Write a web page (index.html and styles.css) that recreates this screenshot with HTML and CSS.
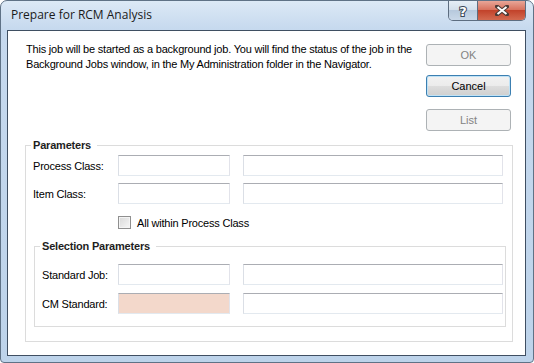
FILE: index.html
```html
<!DOCTYPE html>
<html lang="en">
<head>
  <meta charset="UTF-8">
  <title>Prepare for RCM Analysis</title>
  <link rel="stylesheet" href="styles.css">
</head>
<body>
  <div class="window">
    <div class="titlebar">
      <span class="title">Prepare for RCM Analysis</span>
      <div class="caption-btns">
        <span class="cap-btn help">
          <svg width="14" height="16" viewBox="0 0 14 16">
            <text x="7" y="13" text-anchor="middle" class="help-glyph">?</text>
          </svg>
        </span>
        <span class="cap-btn close">
          <svg width="14" height="11" viewBox="0 0 14 11">
            <path d="M2 1.5 L12 9.5 M12 1.5 L2 9.5" stroke="#4a3a36" stroke-width="4" stroke-linecap="round"/>
            <path d="M2.5 2 L11.5 9 M11.5 2 L2.5 9" stroke="#fff" stroke-width="2"/>
          </svg>
        </span>
      </div>
    </div>

    <div class="client">
      <div class="top">
        <p class="message">This job will be started as a background job. You will find the status of the job in the<br>Background Jobs window, in the My Administration folder in the Navigator.</p>
        <div class="actions">
          <button class="btn" disabled>OK</button>
          <button class="btn default">Cancel</button>
          <button class="btn list" disabled>List</button>
        </div>
      </div>

      <!-- Parameters -->
      <fieldset class="group params">
        <legend>Parameters</legend>
        <div class="row">
          <label class="lbl">Process Class:</label>
          <input class="field short" type="text">
          <input class="field long" type="text">
        </div>
        <div class="row">
          <label class="lbl">Item Class:</label>
          <input class="field short" type="text">
          <input class="field long" type="text">
        </div>
        <div class="check-row">
          <span class="check"></span>
          <span>All within Process Class</span>
        </div>

        <fieldset class="group selection">
          <legend>Selection Parameters</legend>
          <div class="row">
            <label class="lbl">Standard Job:</label>
            <input class="field short" type="text">
            <input class="field long" type="text">
          </div>
          <div class="row">
            <label class="lbl">CM Standard:</label>
            <input class="field short required" type="text">
            <input class="field long" type="text">
          </div>
        </fieldset>
      </fieldset>
    </div>
  </div>
</body>
</html>
```

FILE: styles.css
```css
body {
  margin: 0;
  background: #fff;
  font-family: "Liberation Sans", Arial, sans-serif;
  font-size: 11px;
  letter-spacing: -0.2px;
  color: #000;
}

.window {
  width: 534px;
  height: 363px;
  box-sizing: border-box;
  border: 1px solid #5f7286;
  border-radius: 7px 7px 4px 4px;
  background: linear-gradient(#dce9f6, #c6d9ee 28px, #bdd3ea);
  display: flex;
  flex-direction: column;
}

.titlebar {
  height: 29px;
  display: flex;
  align-items: flex-start;
}

.title {
  flex: 1;
  padding: 6px 0 0 10px;
  font-family: "Open Sans", sans-serif;
  font-size: 12px;
  line-height: 16px;
  letter-spacing: 0;
  color: #1a1a1a;
}

.caption-btns {
  display: flex;
  margin-right: 7px;
  height: 19px;
  border: 1px solid #5d6d80;
  border-top: none;
  border-radius: 0 0 5px 5px;
  overflow: hidden;
}

.cap-btn {
  display: flex;
  align-items: center;
  justify-content: center;
}

.help {
  width: 28px;
  border-right: 1px solid #5d6d80;
  background: linear-gradient(#e6eef6, #d4e0ec 45%, #b7c9dd 50%, #c9d8e8);
}

/* white glyph with dark outline, like the system caption buttons */
.help-glyph {
  font-family: "DejaVu Sans", sans-serif;
  font-size: 13px;
  font-weight: bold;
  fill: #fff;
  stroke: #3a4656;
  stroke-width: 2px;
  paint-order: stroke;
}

.close {
  width: 47px;
  background: linear-gradient(#e8a698, #d8735f 45%, #c2432b 50%, #d36a50);
}

.client {
  flex: 1;
  margin: 0 7px 6px 6px;
  background: #fff;
  border: 1px solid #3f4f62;
  display: flex;
  flex-direction: column;
}

.top {
  display: flex;
  justify-content: space-between;
}

.message {
  margin: 0;
  padding: 11px 0 0 18px;
  line-height: 15px;
  white-space: nowrap;
}

.actions {
  display: flex;
  flex-direction: column;
  margin: 13px 14px 0 0;
}

.btn {
  width: 85px;
  height: 22px;
  box-sizing: border-box;
  padding: 0;
  font-family: inherit;
  font-size: 11px;
  letter-spacing: 0;
  border: 1px solid #adb2b5;
  border-radius: 3px;
  background: #f4f4f4;
  color: #838383;
}

.btn.default {
  margin-top: 9px;
  color: #000;
  border-color: #3c7fb1;
  background: linear-gradient(#f2f2f2, #ebebeb 50%, #dddddd 50%, #cfcfcf);
  box-shadow: inset 0 0 0 1px #bfe2f6;
}

.btn.list {
  margin-top: 12px;
}

.group {
  margin: 0;
  border: 1px solid #dcdcdc;
  min-width: 0;
}

.group legend {
  padding: 0 6px 0 2px;
  margin-left: -2px;
  font-weight: bold;
  line-height: 14px;
  color: #1e1e1e;
}

.params {
  margin: 7px 12px 0 17px;
  padding: 3px 6px 14px 7px;
}

.selection {
  margin: 10px 0 0 1px;
  padding: 11px 2px 12px 7px;
}

.row {
  display: flex;
  align-items: center;
  height: 21px;
  margin-bottom: 7px;
}

.selection .row {
  margin-bottom: 8px;
}

.selection .row:last-child {
  margin-bottom: 0;
}

.lbl {
  width: 85px;
}

.selection .lbl {
  width: 76px;
}

.field {
  height: 21px;
  box-sizing: border-box;
  margin: 0;
  padding: 0 3px;
  border: 1px solid;
  border-color: #abadb3 #e2e3ea #e3e9ef #dbdfe6;
  background: #fff;
}

.field.short {
  width: 112px;
}

.field.long {
  width: 260px;
  margin-left: 13px;
}

.field.required {
  background: #f3d8cb;
}

.check-row {
  display: flex;
  align-items: center;
  gap: 6px;
  margin: 12px 0 0 85px;
  height: 13px;
}

.check {
  width: 13px;
  height: 13px;
  box-sizing: border-box;
  border: 1px solid #8f8f8f;
  background: linear-gradient(135deg, #d8d8d8, #f7f7f7);
  box-shadow: inset 0 0 0 1px #f4f4f4;
}
```
